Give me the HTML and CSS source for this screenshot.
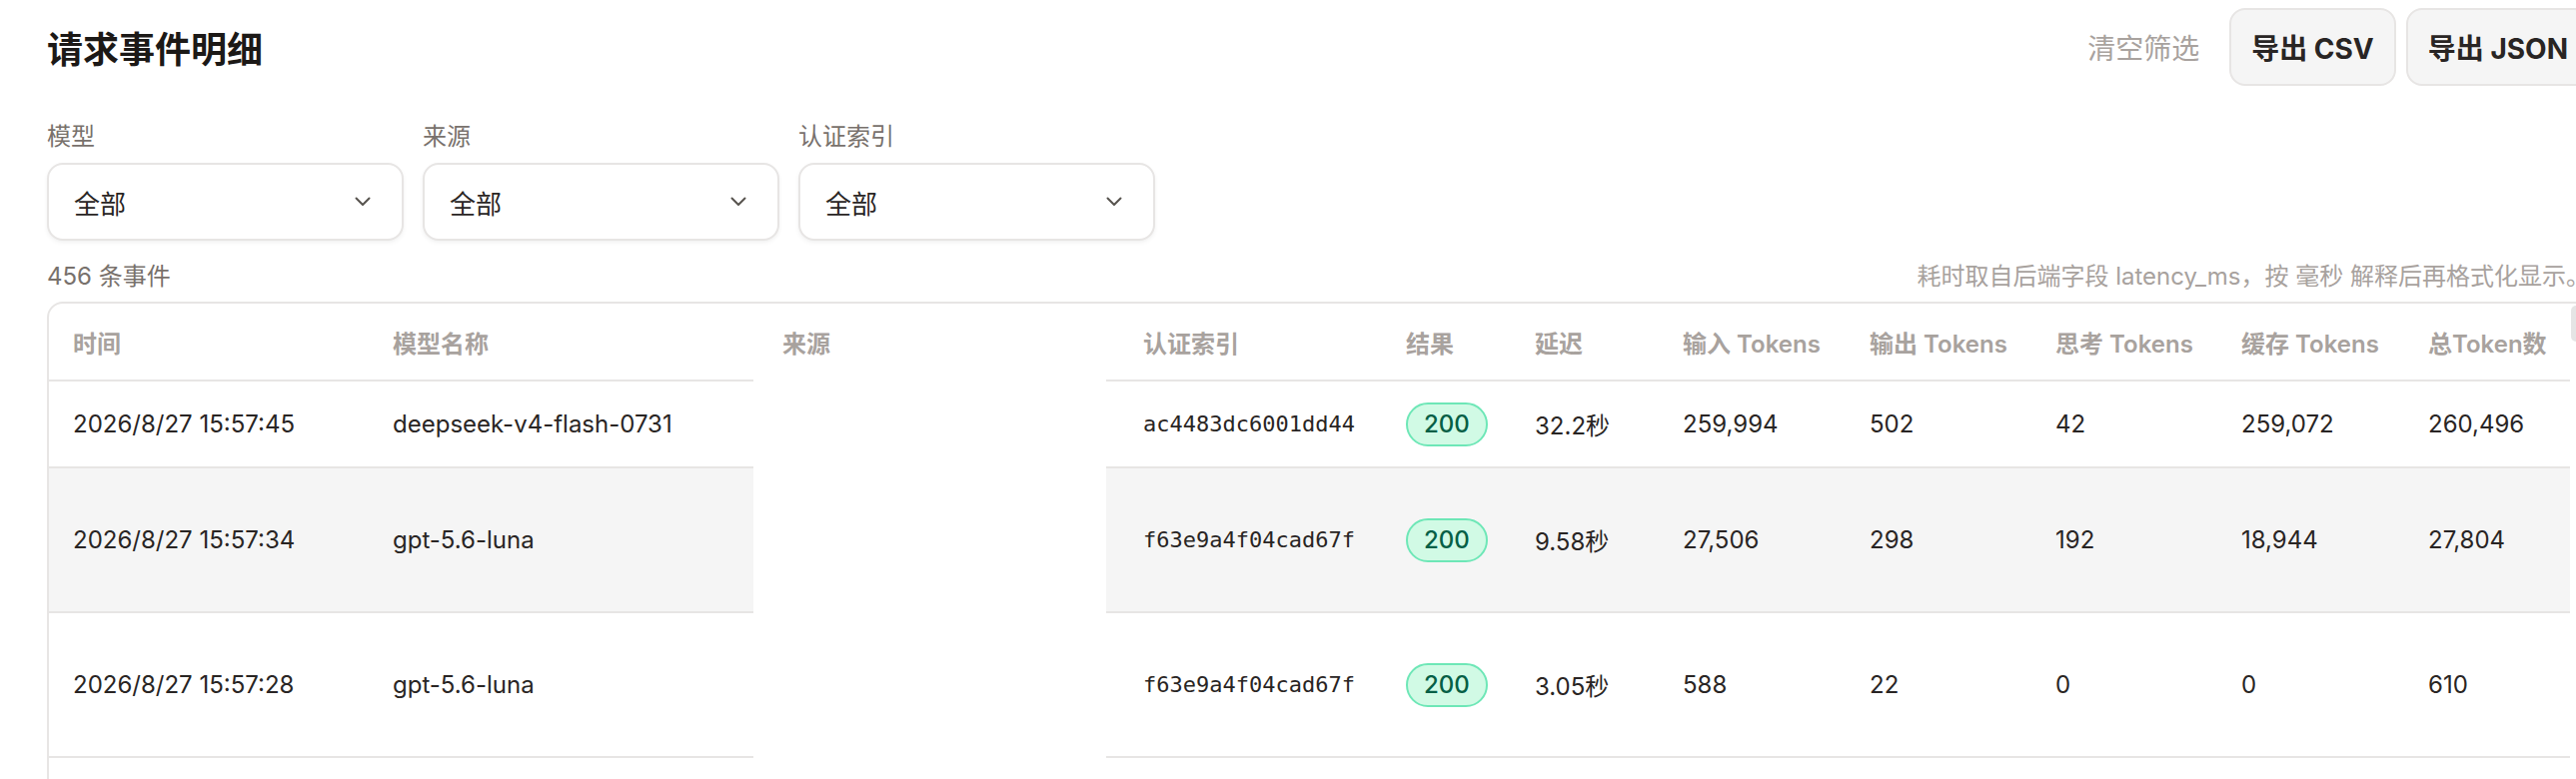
FILE: index.html
```html
<!DOCTYPE html>
<html lang="zh-CN">
<head>
<meta charset="utf-8">
<title>请求事件明细</title>
<link rel="stylesheet" href="styles.css">
</head>
<body>
<div class="page">
  <header class="topbar">
    <h1 class="title">请求事件明细</h1>
    <div class="actions">
      <button class="link-btn" type="button">清空筛选</button>
      <button class="btn" type="button">导出 CSV</button>
      <button class="btn" type="button">导出 JSON</button>
    </div>
  </header>

  <section class="filters">
    <div class="field">
      <span class="field-label">模型</span>
      <div class="select"><span>全部</span><svg class="chev" viewBox="0 0 16 10" width="16" height="10"><polyline points="1.5,1.5 8,8 14.5,1.5"/></svg></div>
    </div>
    <div class="field">
      <span class="field-label">来源</span>
      <div class="select"><span>全部</span><svg class="chev" viewBox="0 0 16 10" width="16" height="10"><polyline points="1.5,1.5 8,8 14.5,1.5"/></svg></div>
    </div>
    <div class="field">
      <span class="field-label">认证索引</span>
      <div class="select"><span>全部</span><svg class="chev" viewBox="0 0 16 10" width="16" height="10"><polyline points="1.5,1.5 8,8 14.5,1.5"/></svg></div>
    </div>
  </section>

  <div class="meta">
    <span class="count">456 条事件</span>
    <span class="note">耗时取自后端字段 latency_ms，按 毫秒 解释后再格式化显示。</span>
  </div>

  <div class="table-wrap">
    <div class="table">
      <div class="tr thead">
        <div class="td c-time">时间</div>
        <div class="td c-model">模型名称</div>
        <div class="td c-src">来源</div>
        <div class="td c-auth">认证索引</div>
        <div class="td c-res">结果</div>
        <div class="td c-lat">延迟</div>
        <div class="td c-in">输入 Tokens</div>
        <div class="td c-out">输出 Tokens</div>
        <div class="td c-think">思考 Tokens</div>
        <div class="td c-cache">缓存 Tokens</div>
        <div class="td c-total">总Token数</div>
      </div>

      <div class="tr row-short">
        <div class="td c-time">2026/8/27 15:57:45</div>
        <div class="td c-model">deepseek-v4-flash-0731</div>
        <div class="td c-src"></div>
        <div class="td c-auth mono">ac4483dc6001dd44</div>
        <div class="td c-res"><span class="badge">200</span></div>
        <div class="td c-lat">32.2秒</div>
        <div class="td c-in">259,994</div>
        <div class="td c-out">502</div>
        <div class="td c-think">42</div>
        <div class="td c-cache">259,072</div>
        <div class="td c-total">260,496</div>
      </div>

      <div class="tr row-tall is-hover">
        <div class="td c-time">2026/8/27 15:57:34</div>
        <div class="td c-model">gpt-5.6-luna</div>
        <div class="td c-src"></div>
        <div class="td c-auth mono">f63e9a4f04cad67f</div>
        <div class="td c-res"><span class="badge">200</span></div>
        <div class="td c-lat">9.58秒</div>
        <div class="td c-in">27,506</div>
        <div class="td c-out">298</div>
        <div class="td c-think">192</div>
        <div class="td c-cache">18,944</div>
        <div class="td c-total">27,804</div>
      </div>

      <div class="tr row-tall">
        <div class="td c-time">2026/8/27 15:57:28</div>
        <div class="td c-model">gpt-5.6-luna</div>
        <div class="td c-src"></div>
        <div class="td c-auth mono">f63e9a4f04cad67f</div>
        <div class="td c-res"><span class="badge">200</span></div>
        <div class="td c-lat">3.05秒</div>
        <div class="td c-in">588</div>
        <div class="td c-out">22</div>
        <div class="td c-think">0</div>
        <div class="td c-cache">0</div>
        <div class="td c-total">610</div>
      </div>

      <div class="tr row-tall">
        <div class="td c-time"></div>
        <div class="td c-model"></div>
        <div class="td c-src"></div>
        <div class="td c-auth"></div>
        <div class="td c-res"></div>
        <div class="td c-lat"></div>
        <div class="td c-in"></div>
        <div class="td c-out"></div>
        <div class="td c-think"></div>
        <div class="td c-cache"></div>
        <div class="td c-total"></div>
      </div>
    </div>
    <div class="scroll-thumb"></div>
  </div>
</div>
</body>
</html>
```

FILE: styles.css
```css
html, body {
  margin: 0;
  padding: 0;
  background: #ffffff;
  overflow: hidden;
}

body {
  font-family: Inter, "Noto Sans CJK SC", sans-serif;
  color: #292524;
}

.page {
  width: 2545px;
  padding: 8px 0 0 47px;
}

/* ---------- top bar ---------- */
.topbar {
  display: flex;
  align-items: center;
  justify-content: space-between;
  height: 78px;
}

.title {
  margin: 0;
  font-size: 36px;
  font-weight: 700;
  color: #1c1917;
}

.actions {
  display: flex;
  align-items: center;
  gap: 10px;
}

.link-btn {
  border: none;
  background: none;
  padding: 0;
  margin-right: 20px;
  font-family: inherit;
  font-size: 28px;
  color: #a8a29e;
}

.btn {
  height: 78px;
  padding: 0 20px;
  border: 2px solid #e7e5e4;
  border-radius: 16px;
  background: #f5f5f5;
  font-family: inherit;
  font-size: 28px;
  font-weight: 700;
  color: #292524;
}

/* ---------- filters ---------- */
.filters {
  display: flex;
  gap: 19px;
  margin-top: 33px;
}

.field {
  display: flex;
  flex-direction: column;
  gap: 8px;
  width: 357px;
}

.field-label {
  font-size: 24px;
  line-height: 36px;
  color: #78716c;
}

.select {
  box-sizing: border-box;
  height: 78px;
  display: flex;
  align-items: center;
  justify-content: space-between;
  padding: 0 31px 0 25px;
  border: 2px solid #e7e5e4;
  border-radius: 16px;
  background: #ffffff;
  box-shadow: 0 2px 4px rgba(0, 0, 0, 0.06);
  font-size: 26px;
  color: #292524;
}

.chev polyline {
  fill: none;
  stroke: #57534e;
  stroke-width: 2;
  stroke-linecap: round;
  stroke-linejoin: round;
}

/* ---------- meta row ---------- */
.meta {
  display: flex;
  justify-content: space-between;
  margin-top: 18px;
  font-size: 24px;
  line-height: 36px;
}

.count {
  color: #78716c;
}

.note {
  color: #a8a29e;
}

/* ---------- table ---------- */
.table-wrap {
  position: relative;
  margin-top: 7px;
  border: 2px solid #e7e5e4;
  border-radius: 16px;
  height: 600px;
  overflow: hidden;
}

.table {
  width: 2523px;
}

.tr {
  display: flex;
}

.td {
  box-sizing: border-box;
  flex: none;
  display: flex;
  align-items: center;
  padding-left: 24px;
  border-bottom: 2px solid #e7e5e4;
  font-size: 24px;
  white-space: nowrap;
}

.thead .td {
  height: 78px;
  font-weight: 600;
  color: #a8a29e;
}

.row-short .td { height: 87px; }
.row-tall .td { height: 145px; }

.is-hover .td { background: #f5f5f5; }

/* source column renders empty in body rows */
.tr .c-src {
  background: #ffffff;
  border-bottom-color: #ffffff;
}

.c-time  { width: 320px; }
.c-model { width: 385px; }
.c-src   { width: 353px; padding-left: 29px; }
.c-auth  { width: 276px; padding-left: 37px; }
.c-res   { width: 129px; }
.c-lat   { width: 148px; }
.c-in    { width: 187px; }
.c-out   { width: 186px; }
.c-think { width: 186px; }
.c-cache { width: 187px; }
.c-total { width: 166px; }

.mono {
  font-family: "DejaVu Sans Mono", "Liberation Mono", monospace;
  font-size: 22px;
}

.badge {
  display: inline-flex;
  align-items: center;
  justify-content: center;
  box-sizing: border-box;
  height: 44px;
  padding: 0 16px;
  border: 2px solid #6ee7b7;
  border-radius: 22px;
  background: #d1fae5;
  color: #065f46;
  font-size: 24px;
  font-weight: 500;
}

.scroll-thumb {
  position: absolute;
  top: 2px;
  right: 7px;
  width: 10px;
  height: 36px;
  border-radius: 6px;
  background: #e5e5e5;
}
```
